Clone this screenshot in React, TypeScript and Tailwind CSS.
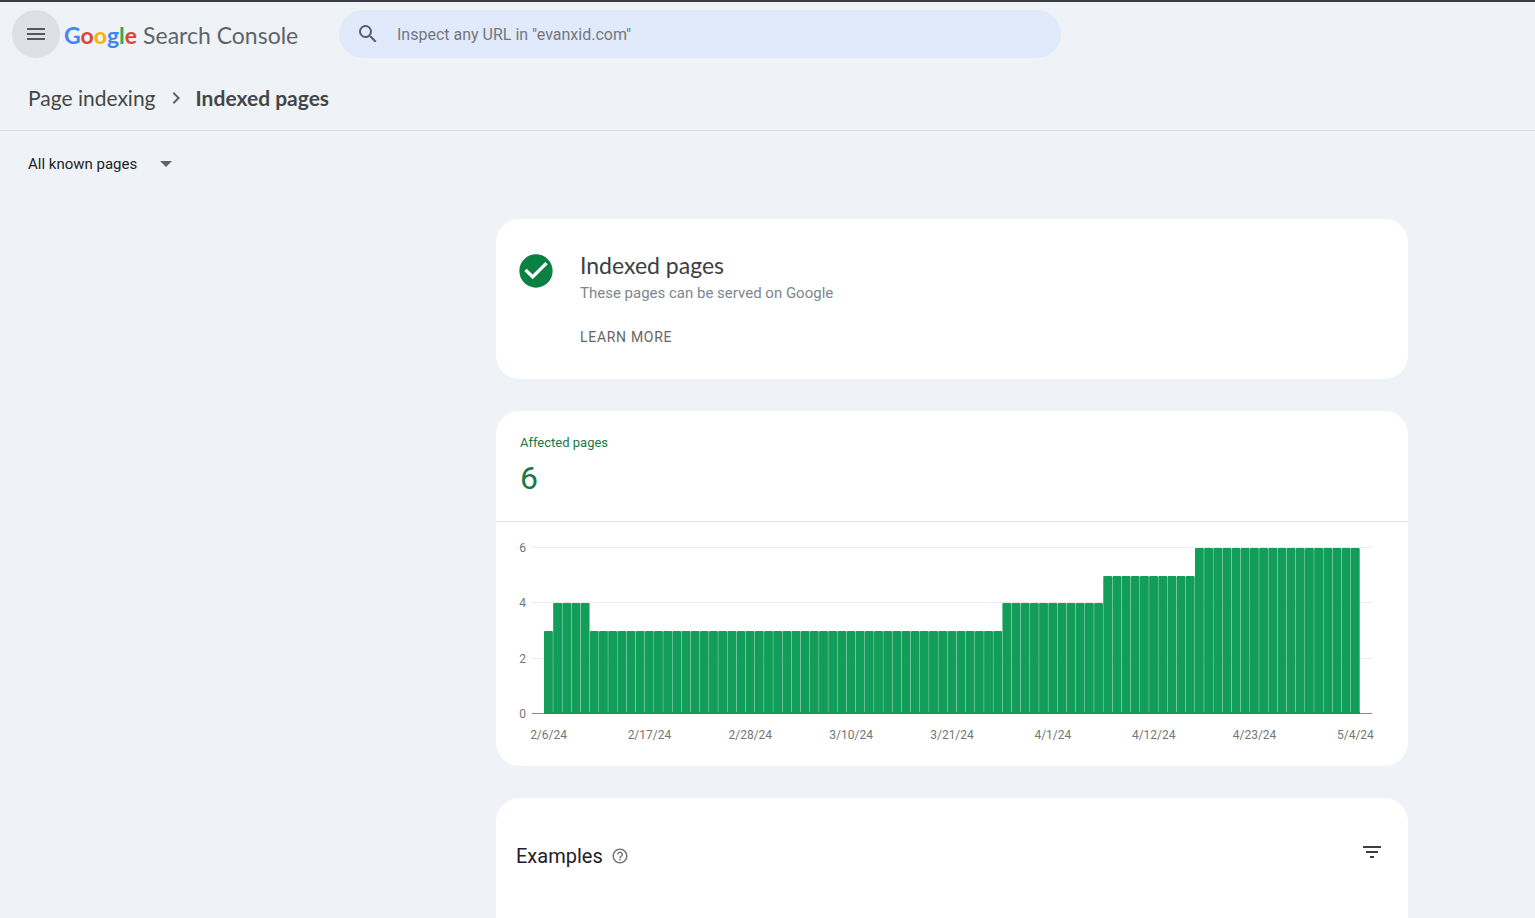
/**
 * IndexedPages
 *
 * Search Console report: pages that are indexed, with daily history.
 */

import React, { useState } from 'react';
import {
  MdCheckCircle,
  MdChevronRight,
  MdFilterList,
  MdHelpOutline,
  MdMenu,
  MdSearch,
} from 'react-icons/md';

interface Run {
  count: number;
  days: number;
}

// Daily counts from 2/6/24 to 5/4/24, grouped by equal values
const RUNS: Run[] = [
  { count: 3, days: 1 },
  { count: 4, days: 4 },
  { count: 3, days: 45 },
  { count: 4, days: 11 },
  { count: 5, days: 10 },
  { count: 6, days: 18 },
];

const DAILY = RUNS.flatMap((run) => Array.from({ length: run.days }, () => run.count));

const DATE_LABELS = [
  '2/6/24',
  '2/17/24',
  '2/28/24',
  '3/10/24',
  '3/21/24',
  '4/1/24',
  '4/12/24',
  '4/23/24',
  '5/4/24',
];

const CHART = { left: 48, right: 864, top: 26, base: 192, labelEvery: 11 };

const LOGO_LETTERS = [
  { letter: 'G', color: 'text-[#4285f4]' },
  { letter: 'o', color: 'text-[#db4437]' },
  { letter: 'o', color: 'text-[#f4b400]' },
  { letter: 'g', color: 'text-[#4285f4]' },
  { letter: 'l', color: 'text-[#34a853]' },
  { letter: 'e', color: 'text-[#db4437]' },
];

const HistoryChart: React.FC = () => {
  const step = (CHART.right - CHART.left) / DAILY.length;
  const yFor = (value: number) => CHART.base - Math.round(((CHART.base - CHART.top) * value) / 6 + 0.1);

  return (
    <svg viewBox="0 0 912 244" className="block w-full" role="img" aria-label="Affected pages per day">
      {[6, 4, 2, 0].map((tick) => (
        <g key={tick}>
          <rect
            x={36}
            y={yFor(tick) - 1}
            width={840}
            height={1}
            className={tick === 0 ? 'fill-[#8a8a8a]' : 'fill-[#ebebeb]'}
          />
          <text x={30} y={yFor(tick) + 4} textAnchor="end" className="fill-[#757575] text-xs">
            {tick}
          </text>
        </g>
      ))}

      {DAILY.map((value, i) => (
        <rect
          key={i}
          x={CHART.left + i * step}
          y={yFor(value)}
          width={step - 0.3}
          height={CHART.base - yFor(value)}
          rx={1}
          className="fill-[#129e5a]"
        />
      ))}
      <rect
        x={CHART.left}
        y={CHART.base - 2}
        width={CHART.right - CHART.left}
        height={2}
        className="fill-[#129e5a]"
      />

      {DATE_LABELS.map((label, i) => (
        <text
          key={label}
          x={CHART.left + step * (i * CHART.labelEvery + 0.5)}
          y={217}
          textAnchor="middle"
          className="fill-[#757575] text-xs"
        >
          {label}
        </text>
      ))}
    </svg>
  );
};

const App: React.FC = () => {
  const [url, setUrl] = useState('');
  const [scope, setScope] = useState('known');

  return (
    <div className="flex h-screen flex-col overflow-hidden border-t-2 border-[#3c3d40] bg-[#eff3f8] font-['Roboto',sans-serif]">
      {/* Top bar */}
      <header className="flex items-center pt-2 pl-3">
        <button
          type="button"
          aria-label="Main menu"
          className="flex size-12 shrink-0 items-center justify-center rounded-full bg-[#dde1e7] text-[#55585c]"
        >
          <MdMenu size={24} />
        </button>
        <a
          href="#"
          className="flex w-[275px] shrink-0 items-baseline gap-1.5 pt-0.5 pl-1 font-['Lato',sans-serif] text-[23px] text-[#5f6368]"
        >
          <span className="font-bold">
            {LOGO_LETTERS.map(({ letter, color }, i) => (
              <span key={i} className={color}>
                {letter}
              </span>
            ))}
          </span>
          <span>Search Console</span>
        </a>
        <label className="ml-1 flex h-12 w-full max-w-[722px] items-center gap-[17px] rounded-full bg-[#e1eafb] px-[17px] text-[#5a5f66]">
          <MdSearch size={24} className="shrink-0" />
          <input
            type="text"
            value={url}
            onChange={(e) => setUrl(e.target.value)}
            placeholder={'Inspect any URL in "evanxid.com"'}
            aria-label="Inspect any URL"
            className="w-full bg-transparent pt-0.5 text-base outline-none placeholder:text-[#72777e]"
          />
        </label>
      </header>

      {/* Breadcrumb */}
      <nav
        aria-label="Breadcrumb"
        className="mt-2 flex h-[65px] shrink-0 items-center gap-2 border-b border-[#dadde2] px-7 font-['Lato',sans-serif] text-[21px] text-[#444746]"
      >
        <a href="#">Page indexing</a>
        <MdChevronRight size={24} className="text-[#5f6368]" />
        <span className="font-bold">Indexed pages</span>
      </nav>

      {/* Page scope */}
      <div className="flex h-[66px] shrink-0 items-center px-7">
        <div className="relative flex items-center">
          <select
            value={scope}
            onChange={(e) => setScope(e.target.value)}
            aria-label="Pages shown"
            className="w-36 appearance-none bg-transparent text-[15px] text-[#202124] outline-none"
          >
            <option value="known">All known pages</option>
            <option value="submitted">All submitted pages</option>
          </select>
          <svg viewBox="0 0 12 6" className="pointer-events-none absolute right-0 h-1.5 w-3 fill-[#5f6368]">
            <path d="M0 0h12L6 6z" />
          </svg>
        </div>
      </div>

      <main className="flex min-h-0 flex-1 flex-col pt-[22px] pl-[369px]">
        <div className="mx-auto flex min-h-0 w-full max-w-[912px] flex-1 flex-col gap-8">
          {/* Summary */}
          <section className="flex h-40 shrink-0 gap-6 rounded-3xl bg-white px-5 py-8">
            <MdCheckCircle size={40} className="shrink-0 text-[#0b8043]" />
            <div>
              <h1 className="font-['Lato',sans-serif] text-[23px] leading-7 text-[#3c4043]">Indexed pages</h1>
              <p className="text-[15px] leading-7 text-[#80868b]">These pages can be served on Google</p>
              <a href="#" className="mt-5 block text-sm tracking-wider text-[#666666]">
                LEARN MORE
              </a>
            </div>
          </section>

          {/* History */}
          <section className="shrink-0 overflow-hidden rounded-3xl bg-white">
            <div className="h-[111px] border-b border-[#e0e0e0] px-6 pt-5">
              <h2 className="text-[13px] leading-6 text-[#1b7745]">Affected pages</h2>
              <p className="text-[32px] leading-[46px] text-[#1b7745]">6</p>
            </div>
            <HistoryChart />
          </section>

          {/* Examples */}
          <section className="flex flex-1 items-start justify-between rounded-t-3xl bg-white px-5 pt-10">
            <div className="flex h-9 items-center gap-2">
              <h2 className="text-xl text-[#202124]">Examples</h2>
              <button type="button" aria-label="About examples" className="text-[#757575]">
                <MdHelpOutline size={18} />
              </button>
            </div>
            <button type="button" aria-label="Filter rows" className="mt-0.5 mr-1 text-[#3c3d40]">
              <MdFilterList size={24} />
            </button>
          </section>
        </div>
      </main>
    </div>
  );
};

export default App;
